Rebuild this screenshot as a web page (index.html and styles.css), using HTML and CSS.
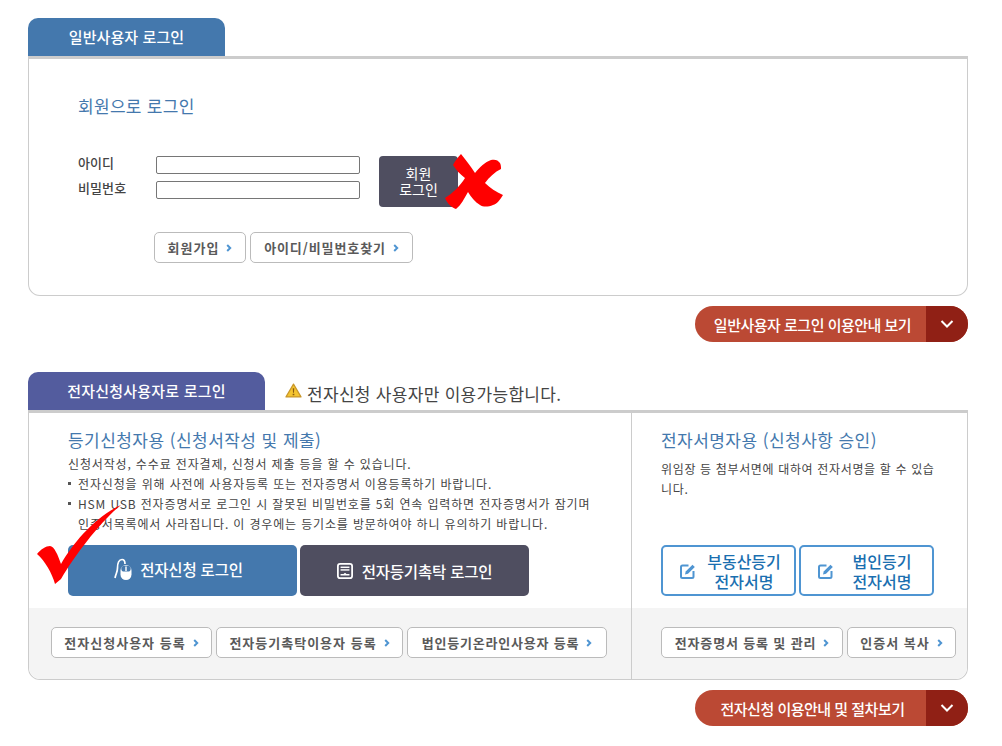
FILE: index.html
```html
<!DOCTYPE html>
<html lang="ko">
<head>
<meta charset="utf-8">
<title>로그인</title>
<link rel="stylesheet" href="styles.css">
</head>
<body>
<main class="page">
  <section class="panel">
    <div class="tabrow"><h2 class="tab tab-blue">일반사용자 로그인</h2></div>
    <div class="box box-member">
      <h3 class="member-title">회원으로 로그인</h3>
      <form class="login-form">
        <div class="fields">
          <label class="field"><span class="field-label">아이디</span><input class="input" type="text"></label>
          <label class="field"><span class="field-label">비밀번호</span><input class="input" type="password"></label>
        </div>
        <div class="login-wrap">
          <button class="login-btn" type="button">회원<br>로그인</button>
          <svg class="mark-x" viewBox="0 0 60 56" aria-hidden="true"><path d="M18 0C23 6 28 13 32 19C37 13 42 8 48 6C52 5 55 6 57 9C58 11 58 13 58 15C52 18 46 23 42 29C47 34 53 38 60 41C57 46 54 50 50 51C45 53 40 53 37 51C32 48 28 43 25 38C21 45 18 51 13 55C8 53 4 49 2 44C10 39 17 32 22 24C17 20 13 16 10 11C12 7 15 3 18 0Z" fill="#ff0000"/></svg>
        </div>
      </form>
      <div class="links links-member">
        <a class="link">회원가입<svg class="arrow" viewBox="0 0 6 8"><path d="M1.200 1l3 3-3 3" /></svg></a>
        <a class="link">아이디/비밀번호찾기<svg class="arrow" viewBox="0 0 6 8"><path d="M1.200 1l3 3-3 3" /></svg></a>
      </div>
    </div>
    <div class="pill-row">
      <a class="pill pill-one"><span class="pill-text">일반사용자 로그인 이용안내 보기</span><span class="pill-arrow"><svg viewBox="0 0 14 10"><path d="M1.500 2l5.500 5.500L12.500 2"/></svg></span></a>
    </div>
  </section>

  <section class="panel panel-second">
    <div class="tabrow">
      <h2 class="tab tab-purple">전자신청사용자로 로그인</h2>
      <p class="notice">
        <svg class="warn" viewBox="0 0 18 16" aria-hidden="true"><path d="M9 1.200L17 14.800H1Z" fill="#f4c430" stroke="#c8962a" stroke-width="1.300" stroke-linejoin="round"/><path d="M8.200 5.500h1.600l-.3 5h-1zM8.100 11.400h1.800v1.700H8.100z" fill="#8a5a12"/></svg>
        전자신청 사용자만 이용가능합니다.
      </p>
    </div>
    <div class="box box-cert">
      <div class="col col-left">
        <div class="col-top col-top-left">
          <h3 class="col-title">등기신청자용 (신청서작성 및 제출)</h3>
          <p class="line">신청서작성, 수수료 전자결제, 신청서 제출 등을 할 수 있습니다.</p>
          <ul class="notes">
            <li>전자신청을 위해 사전에 사용자등록 또는 전자증명서 이용등록하기 바랍니다.</li>
            <li>HSM USB 전자증명서로 로그인 시 잘못된 비밀번호를 5회 연속 입력하면 전자증명서가 잠기며 인증서목록에서 사라집니다. 이 경우에는 등기소를 방문하여야 하니 유의하기 바랍니다.</li>
          </ul>
          <div class="big-row">
            <a class="big big-blue">
              <svg class="big-icon" viewBox="0 0 20 22" aria-hidden="true"><path d="M1 20C2 15 3.500 14 3.500 10C3.500 5 5 1.500 8 1.500C10 1.500 11 3 11 6" fill="none" stroke="#fff" stroke-width="1.700"/><rect x="6.500" y="7" width="11" height="15" rx="5.500" fill="#fff"/><rect x="7.300" y="7.800" width="9.400" height="5.700" rx="3" fill="#4478ad"/><rect x="11.300" y="8.500" width="1.400" height="4.500" fill="#fff"/></svg>
              전자신청 로그인
            </a>
            <a class="big big-dark">
              <svg class="big-icon icon-doc" viewBox="0 0 18 18" aria-hidden="true"><rect x="1" y="1" width="16" height="16" rx="2.500" fill="none" stroke="#fff" stroke-width="2"/><rect x="4" y="4" width="10" height="1.600" fill="#fff"/><rect x="4" y="7" width="10" height="1.600" fill="#fff"/><path d="M4 14v-1.500h3.500C8 11 10 11 10.500 12.500H14V14Z" fill="#fff"/></svg>
              전자등기촉탁 로그인
            </a>
          </div>
        </div>
        <div class="col-bottom links links-left">
          <a class="link">전자신청사용자 등록<svg class="arrow" viewBox="0 0 6 8"><path d="M1.200 1l3 3-3 3" /></svg></a>
          <a class="link">전자등기촉탁이용자 등록<svg class="arrow" viewBox="0 0 6 8"><path d="M1.200 1l3 3-3 3" /></svg></a>
          <a class="link">법인등기온라인사용자 등록<svg class="arrow" viewBox="0 0 6 8"><path d="M1.200 1l3 3-3 3" /></svg></a>
        </div>
        <svg class="mark-check" viewBox="0 0 84 80" aria-hidden="true"><path d="M0 49C4 44 9 41 13 41C17 41 21 50 24 59C36 38 58 12 84 0C64 16 38 50 24 74L18 79C15 68 8 56 0 49Z" fill="#ff0000"/></svg>
      </div>
      <div class="col col-right">
        <div class="col-top col-top-right">
          <h3 class="col-title">전자서명자용 (신청사항 승인)</h3>
          <p class="line line-sign">위임장 등 첨부서면에 대하여 전자서명을 할 수 있습니다.</p>
          <div class="sign-row">
            <a class="sign">
              <svg class="sign-icon" viewBox="0 0 16 16" aria-hidden="true"><path d="M8.500 2.500H2.500A1.500 1.500 0 0 0 1 4v9.500A1.500 1.500 0 0 0 2.500 15H12a1.500 1.500 0 0 0 1.500-1.500V8" fill="none" stroke="#4f95d2" stroke-width="2"/><path d="M5 11.500l.7-3L12.500 1.700l2.300 2.300L8 10.800Z" fill="#4f95d2"/></svg>
              <span class="sign-text">부동산등기<br>전자서명</span>
            </a>
            <a class="sign">
              <svg class="sign-icon" viewBox="0 0 16 16" aria-hidden="true"><path d="M8.500 2.500H2.500A1.500 1.500 0 0 0 1 4v9.500A1.500 1.500 0 0 0 2.500 15H12a1.500 1.500 0 0 0 1.500-1.500V8" fill="none" stroke="#4f95d2" stroke-width="2"/><path d="M5 11.500l.7-3L12.500 1.700l2.300 2.300L8 10.800Z" fill="#4f95d2"/></svg>
              <span class="sign-text">법인등기<br>전자서명</span>
            </a>
          </div>
        </div>
        <div class="col-bottom links links-right">
          <a class="link">전자증명서 등록 및 관리<svg class="arrow" viewBox="0 0 6 8"><path d="M1.200 1l3 3-3 3" /></svg></a>
          <a class="link">인증서 복사<svg class="arrow" viewBox="0 0 6 8"><path d="M1.200 1l3 3-3 3" /></svg></a>
        </div>
      </div>
    </div>
    <div class="pill-row pill-row-second">
      <a class="pill pill-two"><span class="pill-text">전자신청 이용안내 및 절차보기</span><span class="pill-arrow"><svg viewBox="0 0 14 10"><path d="M1.500 2l5.500 5.500L12.500 2"/></svg></span></a>
    </div>
  </section>
</main>
</body>
</html>
```
FILE: styles.css
```css
* { box-sizing: border-box; }
html, body { margin: 0; padding: 0; background: #fff; }
body {
  font-family: "Noto Sans CJK KR", "Noto Sans", sans-serif;
  color: #333;
  font-size: 12px;
}
h2, h3, p, ul { margin: 0; padding: 0; }
a { display: inline-flex; }

.page { width: 940px; margin-left: 28px; padding-top: 18px; }
.panel-second { margin-top: 30px; }

.tabrow { display: flex; align-items: stretch; height: 38px; }
.tab {
  color: #fff;
  font-size: 15px;
  font-weight: 500;
  display: flex;
  align-items: center;
  justify-content: center;
  border-radius: 10px 10px 0 0;
  padding-bottom: 2px;
  letter-spacing: 0.1px;
}
.tab-blue { width: 197px; background: #4478ad; }
.tab-purple { width: 237px; background: #535c9e; letter-spacing: 0.2px; }
.notice {
  display: flex;
  align-items: center;
  gap: 5px;
  margin-left: 20px;
  padding-top: 4px;
  font-size: 17px;
  letter-spacing: 0.3px;
  color: #444;
}
.warn { width: 17px; height: 15px; margin-bottom: 6px; }

.box {
  border: 1px solid #ccc;
  border-top: 3px solid #ccc;
  border-radius: 0 0 12px 12px;
  background: #fff;
}
.box-member { height: 240px; padding: 36px 0 0 49px; }
.member-title {
  font-size: 17px;
  font-weight: 400;
  letter-spacing: 0.3px;
  line-height: 22px;
  color: #4478ad;
}
.login-form { display: flex; margin-top: 39px; }
.fields { display: flex; flex-direction: column; gap: 7px; }
.field { display: flex; align-items: center; height: 18px; }
.field-label {
  width: 78px;
  margin-top: -6px;
  font-size: 13px;
  font-weight: 500;
  color: #444;
  letter-spacing: 0.1px;
}
.input {
  width: 204px;
  height: 18px;
  border: 1px solid #767676;
  border-radius: 2px;
  background: #fff;
  padding: 0;
  margin: 0;
}
.login-wrap { position: relative; margin-left: 19px; }
.login-btn {
  display: block;
  width: 79px;
  height: 51px;
  border: 0;
  border-radius: 4px;
  background: #4f4e60;
  color: #fff;
  font-family: inherit;
  font-size: 14px;
  line-height: 16px;
  padding: 0 0 2px;
}
.mark-x { position: absolute; left: 64px; top: -2px; width: 60px; height: 56px; }

.links { display: flex; gap: 4px; }
.links-member { margin-top: 25px; margin-left: 76px; }
.link {
  align-items: center;
  justify-content: center;
  gap: 7px;
  height: 31px;
  background: #fff;
  border: 1px solid #bbb;
  border-radius: 5px;
  font-size: 13px;
  font-weight: 700;
  color: #5a5a5a;
  letter-spacing: 1px;
  white-space: nowrap;
}
.links-member .link:nth-child(1) { width: 92px; }
.links-member .link:nth-child(2) { width: 163px; letter-spacing: 0.9px; }
.links-left .link:nth-child(1) { width: 161px; }
.links-left .link:nth-child(2) { width: 187px; }
.links-left .link:nth-child(3) { width: 200px; letter-spacing: 0.8px; }
.links-right .link:nth-child(1) { width: 182px; letter-spacing: 0.85px; }
.links-right .link:nth-child(2) { width: 109px; letter-spacing: 1px; }
.arrow { width: 6px; height: 8px; flex: none; }
.arrow path { fill: none; stroke: #4f95d2; stroke-width: 2; }

.pill-row { display: flex; justify-content: flex-end; margin-top: 10px; }
.pill {
  width: 273px;
  height: 36px;
  border-radius: 18px;
  overflow: hidden;
  background: #bb4934;
  color: #fff;
  font-size: 15px;
  font-weight: 500;
}
.pill-text { flex: 1; display: flex; align-items: center; justify-content: center; letter-spacing: -0.5px; padding-left: 4px; }
.pill-arrow {
  width: 42px;
  display: flex;
  align-items: center;
  justify-content: center;
  background: #902015;
}
.pill-arrow svg { width: 14px; height: 10px; }
.pill-arrow path { fill: none; stroke: #fff; stroke-width: 2; }

.box-cert { display: flex; height: 270px; }
.col { display: flex; flex-direction: column; position: relative; }
.col-left { width: 602px; }
.col-right { flex: 1; border-left: 1px solid #ccc; }
.col-top { height: 195px; }
.col-top-left { padding: 15px 0 0 39px; }
.col-top-right { padding: 15px 0 0 29px; display: flex; flex-direction: column; }
.col-title {
  font-size: 17px;
  font-weight: 400;
  letter-spacing: 0.45px;
  line-height: 24px;
  color: #4478ad;
}
.line, .notes li { font-size: 12px; line-height: 20px; color: #444; letter-spacing: 0.85px; }
.line { margin-top: 2px; }
.notes { list-style: none; width: 524px; }
.notes li { position: relative; padding-left: 10px; }
.notes li::before {
  content: "";
  position: absolute;
  left: 0;
  top: 8px;
  width: 3px;
  height: 3px;
  background: #555;
}
.big-row { display: flex; gap: 3px; margin-top: 11px; }
.big {
  width: 229px;
  height: 51px;
  align-items: center;
  justify-content: center;
  gap: 6px;
  border-radius: 5px;
  color: #fff;
  font-size: 15.5px;
  font-weight: 500;
  letter-spacing: -0.2px;
}
.big-blue { background: #4478ad; padding: 0 8px 4px 0; }
.big-dark { background: #4f4e60; }
.big-icon { width: 20px; height: 22px; flex: none; }
.icon-doc { width: 16px; height: 16px; margin-right: 3px; }

.col-bottom {
  flex: 1;
  background: #f4f4f4;
  align-items: flex-start;
  padding-top: 19px;
}
.links-left { padding-left: 22px; border-radius: 0 0 0 12px; }
.links-right { padding-left: 29px; border-radius: 0 0 12px 0; }

.mark-check { position: absolute; left: 8px; top: 92px; width: 84px; height: 80px; }

.line.line-sign { margin-top: 7px; width: 276px; word-break: break-all; letter-spacing: 0.65px; }
.sign-row { display: flex; gap: 3px; margin-top: auto; margin-bottom: 12px; }
.sign {
  width: 135px;
  height: 51px;
  align-items: center;
  border: 2px solid #4f95d2;
  border-radius: 5px;
  color: #1a6fb0;
  font-size: 16px;
  font-weight: 500;
  line-height: 20px;
  padding-left: 17px;
}
.sign-icon { width: 16px; height: 16px; flex: none; }
.sign-text { flex: 1; text-align: center; padding-right: 6px; padding-left: 4px; }
```
